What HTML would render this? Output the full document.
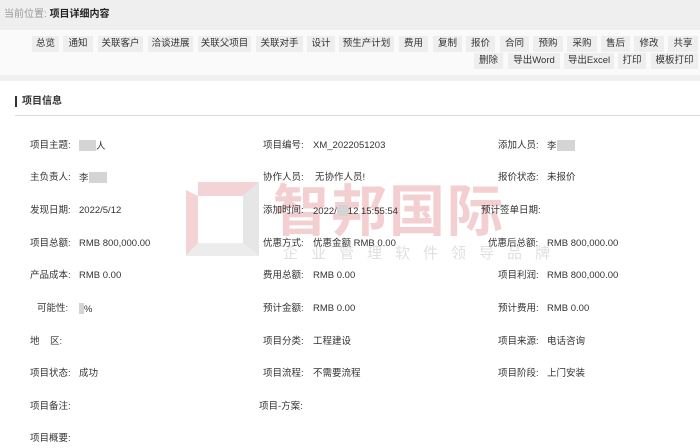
<!DOCTYPE html>
<html><head><meta charset="utf-8"><style>
*{margin:0;padding:0;box-sizing:border-box}
body{width:700px;height:448px;overflow:hidden;background:#fff;font-family:"Liberation Sans","Noto Sans CJK SC",sans-serif;font-size:10px;color:#333;position:relative}
.top{position:absolute;left:0;top:0;width:700px;height:30px;background:#efefef}
.top span{position:absolute;left:4px;top:9px;font-size:10px;color:#999;line-height:12px}
.top b{color:#222}
.bar{position:absolute;left:0;top:30px;width:700px;height:45px;background:#fafafa}
.strip{position:absolute;left:0;top:75px;width:700px;height:6px;background:#efefef}
.btn{position:absolute;height:16px;line-height:16px;background:#eeeeee;text-align:center;font-size:9.5px;color:#333}
.t{position:absolute;font-size:9.5px;color:#333;white-space:nowrap;line-height:12px;height:12px;margin-top:2px}
.g{display:inline-block;background:#d4d4d4;height:11px;vertical-align:-2px}
.h{position:absolute;left:15px;top:96px;font-size:10px;font-weight:bold;border-left:2px solid #333;padding-left:5px;line-height:11px}
.line{position:absolute;left:15px;right:0;top:115px;height:1px;background:#ddd}
</style></head><body>
<div class="top"><span>当前位置: <b>项目详细内容</b></span></div>
<div class="bar"></div><div class="strip"></div>
<div class="btn" style="left:32px;top:36px;width:27px">总览</div>
<div class="btn" style="left:63px;top:36px;width:30px">通知</div>
<div class="btn" style="left:98px;top:36px;width:45px">关联客户</div>
<div class="btn" style="left:148px;top:36px;width:45px">洽谈进展</div>
<div class="btn" style="left:198px;top:36px;width:53px">关联父项目</div>
<div class="btn" style="left:256px;top:36px;width:47px">关联对手</div>
<div class="btn" style="left:307px;top:36px;width:28px">设计</div>
<div class="btn" style="left:339px;top:36px;width:55px">预生产计划</div>
<div class="btn" style="left:399px;top:36px;width:29px">费用</div>
<div class="btn" style="left:433px;top:36px;width:29px">复制</div>
<div class="btn" style="left:466px;top:36px;width:29px">报价</div>
<div class="btn" style="left:500px;top:36px;width:29px">合同</div>
<div class="btn" style="left:533px;top:36px;width:30px">预购</div>
<div class="btn" style="left:567px;top:36px;width:30px">采购</div>
<div class="btn" style="left:601px;top:36px;width:29px">售后</div>
<div class="btn" style="left:634px;top:36px;width:30px">修改</div>
<div class="btn" style="left:668px;top:36px;width:30px">共享</div>
<div class="btn" style="left:474px;top:53px;width:29px">删除</div>
<div class="btn" style="left:508px;top:53px;width:52px">导出Word</div>
<div class="btn" style="left:564px;top:53px;width:50px">导出Excel</div>
<div class="btn" style="left:618px;top:53px;width:28px">打印</div>
<div class="btn" style="left:651px;top:53px;width:47px">模板打印</div>
<div class="h">项目信息</div><div class="line"></div>

<svg style="position:absolute;left:0;top:0" width="700" height="448">
<polygon points="198,182 259,182 243,196 198,196" fill="#f3d3d5"/>
<polygon points="186,190 198,196 198,243 186,256" fill="#f3d3d5"/>
<polygon points="243,196 259,182 259,256 243,243" fill="#e6e6e6"/>
<polygon points="186,256 198,243 243,243 259,256" fill="#ececec"/>
<text x="273" y="231" font-size="56" fill="#f3cfd1" font-family="Noto Sans CJK SC,sans-serif" font-weight="bold" letter-spacing="2">智邦国际</text>
<text x="283" y="258" font-size="15" fill="#e0e0e0" font-family="Noto Sans CJK SC,sans-serif" letter-spacing="13">企业管理软件领导品牌</text>
</svg>

<div class="t" style="left:30px;top:138px">项目主题:</div><div class="t" style="left:79px;top:138px"><span class="g" style="width:17px"></span>人</div>
<div class="t" style="left:263px;top:138px">项目编号:</div><div class="t" style="left:313px;top:138px">XM_2022051203</div>
<div class="t" style="left:498px;top:138px">添加人员:</div><div class="t" style="left:547px;top:138px">李<span class="g" style="width:18px"></span></div>

<div class="t" style="left:30px;top:170px">主负责人:</div><div class="t" style="left:79px;top:170px">李<span class="g" style="width:18px"></span></div>
<div class="t" style="left:263px;top:170px">协作人员:</div><div class="t" style="left:315px;top:170px">无协作人员!</div>
<div class="t" style="left:498px;top:170px">报价状态:</div><div class="t" style="left:547px;top:170px">未报价</div>

<div class="t" style="left:30px;top:203px">发现日期:</div><div class="t" style="left:79px;top:203px">2022/5/12</div>
<div class="t" style="left:263px;top:203px">添加时间:</div><div class="t" style="left:313px;top:203px">2022/<span class="g" style="width:11px"></span>12 15:55:54</div>
<div class="t" style="left:481px;top:203px">预计签单日期:</div>

<div class="t" style="left:30px;top:236px">项目总额:</div><div class="t" style="left:79px;top:236px">RMB 800,000.00</div>
<div class="t" style="left:263px;top:236px">优惠方式:</div><div class="t" style="left:313px;top:236px">优惠金额 RMB 0.00</div>
<div class="t" style="left:488px;top:236px">优惠后总额:</div><div class="t" style="left:547px;top:236px">RMB 800,000.00</div>

<div class="t" style="left:30px;top:268px">产品成本:</div><div class="t" style="left:79px;top:268px">RMB 0.00</div>
<div class="t" style="left:263px;top:268px">费用总额:</div><div class="t" style="left:313px;top:268px">RMB 0.00</div>
<div class="t" style="left:498px;top:268px">项目利润:</div><div class="t" style="left:547px;top:268px">RMB 800,000.00</div>

<div class="t" style="left:37px;top:301px">可能性:</div><div class="t" style="left:79px;top:301px"><span class="g" style="width:5px"></span>%</div>
<div class="t" style="left:263px;top:301px">预计金额:</div><div class="t" style="left:313px;top:301px">RMB 0.00</div>
<div class="t" style="left:498px;top:301px">预计费用:</div><div class="t" style="left:547px;top:301px">RMB 0.00</div>

<div class="t" style="left:30px;top:334px">地&nbsp;&nbsp;&nbsp;&nbsp;区:</div>
<div class="t" style="left:263px;top:334px">项目分类:</div><div class="t" style="left:313px;top:334px">工程建设</div>
<div class="t" style="left:498px;top:334px">项目来源:</div><div class="t" style="left:547px;top:334px">电话咨询</div>

<div class="t" style="left:30px;top:366px">项目状态:</div><div class="t" style="left:79px;top:366px">成功</div>
<div class="t" style="left:263px;top:366px">项目流程:</div><div class="t" style="left:313px;top:366px">不需要流程</div>
<div class="t" style="left:498px;top:366px">项目阶段:</div><div class="t" style="left:547px;top:366px">上门安装</div>

<div class="t" style="left:30px;top:399px">项目备注:</div>
<div class="t" style="left:259px;top:399px">项目-方案:</div>
<div class="t" style="left:30px;top:431px">项目概要:</div>
</body></html>
